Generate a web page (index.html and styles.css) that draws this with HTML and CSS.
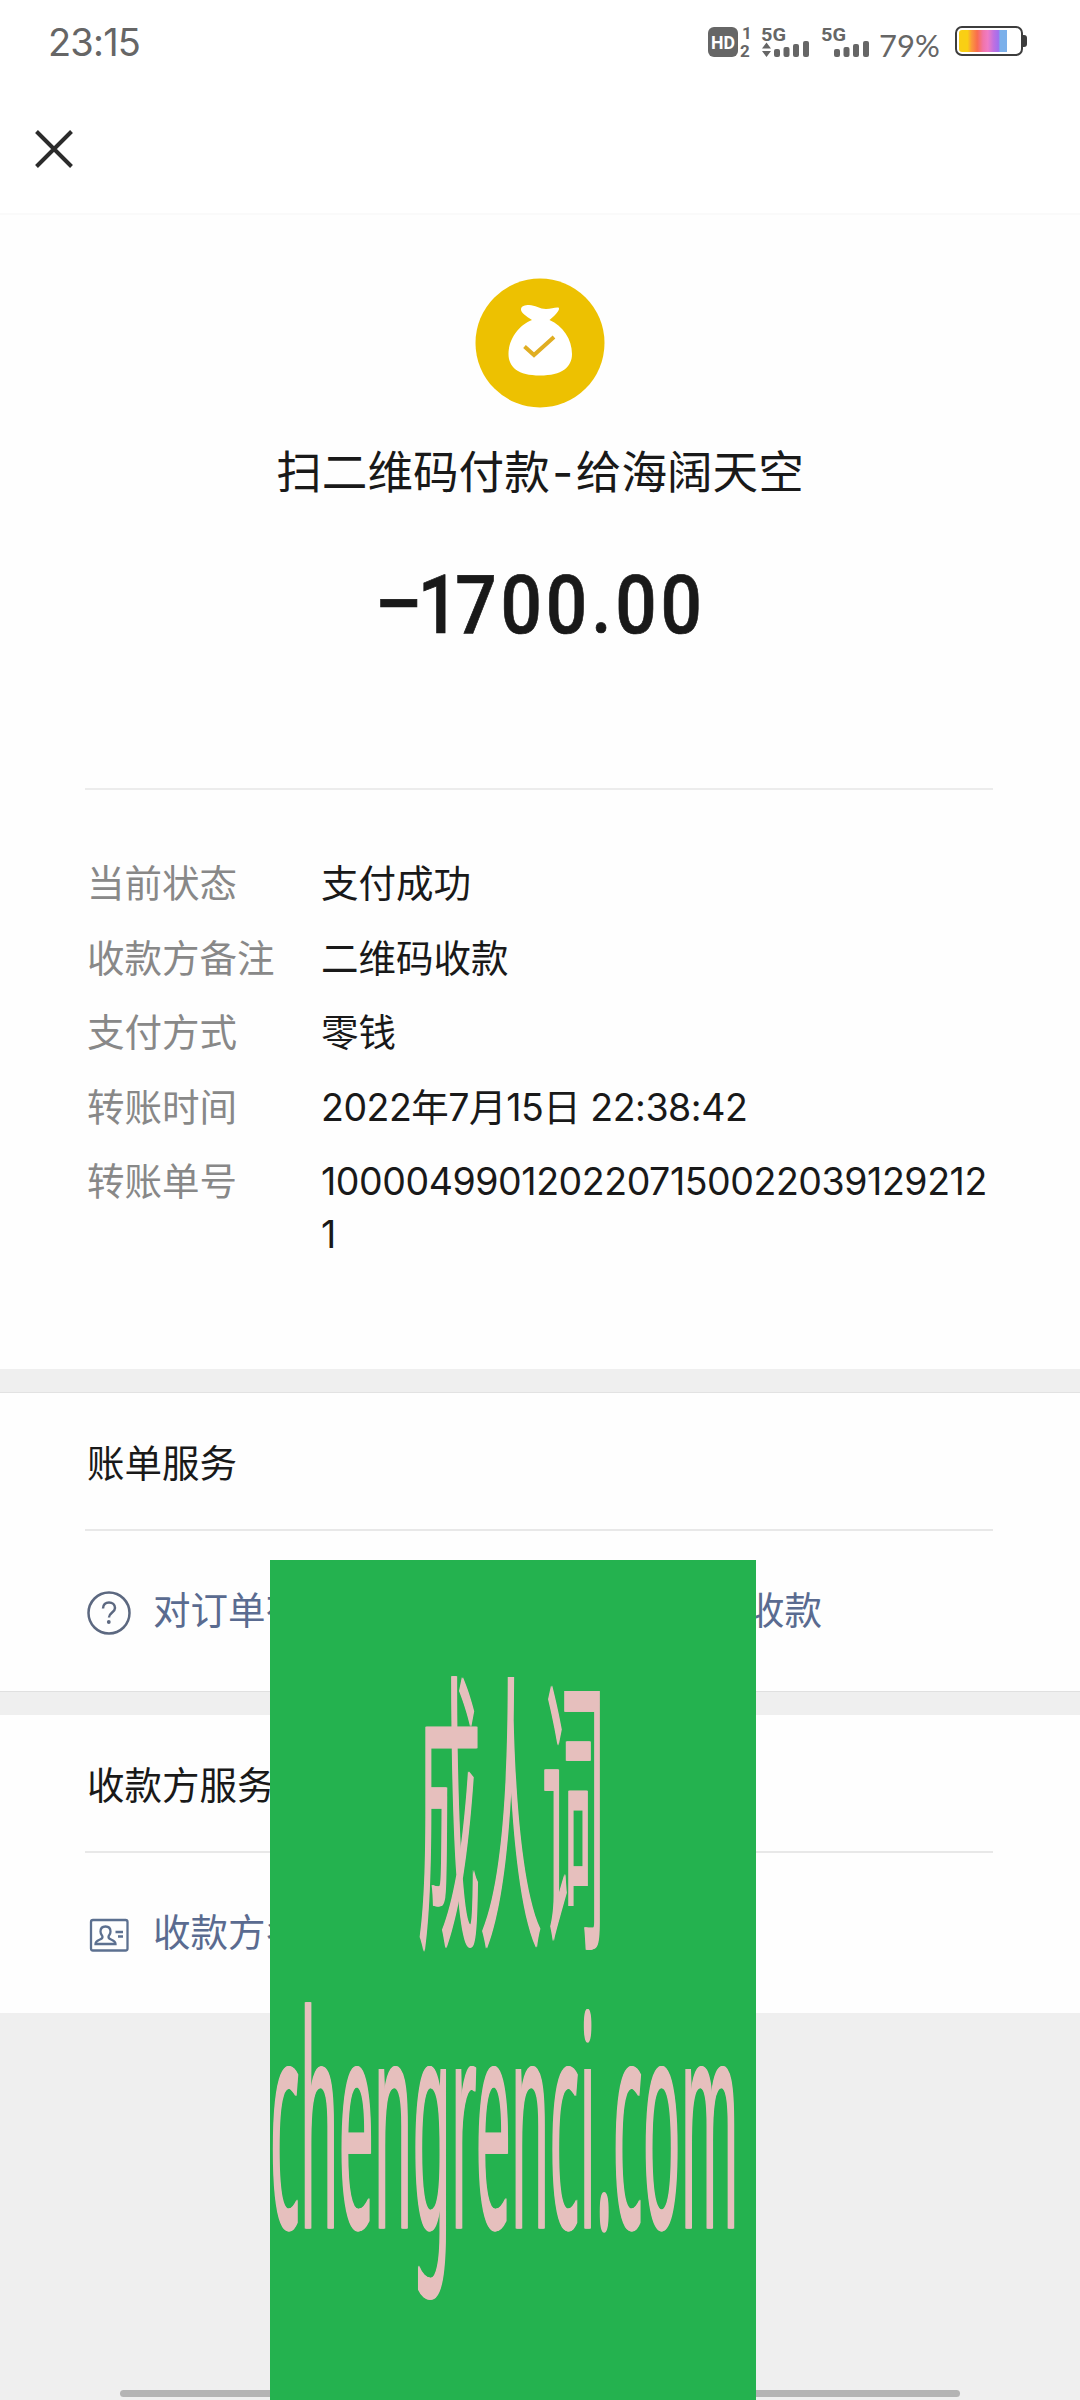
FILE: index.html
```
<!DOCTYPE html>
<html lang="zh-CN">

<head>
    <meta charset="UTF-8">
    <meta name="viewport" content="width=device-width, initial-scale=1.0">
    <title>账单详情</title>
    <link rel="stylesheet" href="styles.css">
</head>

<body>
    <div class="page">
        <div class="status">
            <span class="time">23:15</span>
            <div class="status__right">
                <svg class="network" width="162" height="36" viewBox="0 0 162 36">
                    <rect x="0" y="3" width="30" height="30" rx="6" />
                    <text class="hd" x="3" y="25" textLength="24" lengthAdjust="spacingAndGlyphs">HD</text>
                    <text class="sim" x="34" y="15">1</text>
                    <text class="sim" x="32" y="33">2</text>
                    <text class="net" x="53" y="17" textLength="25" lengthAdjust="spacingAndGlyphs">5G</text>
                    <path d="M58.500 18.500l4.500 6h-9zM58.500 33l4.500-6h-9z" />
                    <rect x="66" y="25" width="6" height="8" rx="2" />
                    <rect x="75.500" y="23" width="6" height="10" rx="2" />
                    <rect x="85" y="20" width="6" height="13" rx="2" />
                    <rect x="95" y="17" width="6" height="16" rx="2" />
                    <text class="net" x="113" y="17" textLength="25" lengthAdjust="spacingAndGlyphs">5G</text>
                    <rect x="126" y="25" width="6" height="8" rx="2" />
                    <rect x="135.500" y="23" width="6" height="10" rx="2" />
                    <rect x="145" y="20" width="6" height="13" rx="2" />
                    <rect x="155" y="17" width="6" height="16" rx="2" />
                </svg>
                <span class="percent">79%</span>
                <div class="battery">
                    <div class="battery__level"></div>
                </div>
            </div>
        </div>
        <div class="nav">
            <svg width="40" height="40" viewBox="0 0 40 40">
                <path d="M2.500 2.500l35 35M37.500 2.500l-35 35" fill="none" stroke="#2b2b2b" stroke-width="4" />
            </svg>
        </div>

        <div class="summary">
            <svg class="logo" width="130" height="130" viewBox="0 0 130 130">
                <circle cx="65" cy="65" r="64.500" fill="#edc101" />
                <path fill="#fff" d="M57 42C51 38 46 35 46 31.500C46 28 50 27 54 27C60 27 65 31 71 31C76 31 80 29 83.500 29.500C85.500 31 82 36 74.500 42C88 48 97 61 97 76C97 89 87 97.500 65 97.500C43 97.500 33.500 89 33.500 76C33.500 61 44 47 57 42Z" />
                <path d="M49.500 68.500l9.500 8.500l20-18" fill="none" stroke="#e0ae22" stroke-width="4" />
            </svg>
            <div class="title">扫二维码付款<span class="dash">-</span>给海阔天空</div>
            <div class="amount"><span class="minus">–</span><span class="one">1</span>700.00</div>
        </div>

        <div class="details">
            <div class="row">
                <span class="label">当前状态</span>
                <span class="value">支付成功</span>
            </div>
            <div class="row">
                <span class="label">收款方备注</span>
                <span class="value">二维码收款</span>
            </div>
            <div class="row">
                <span class="label">支付方式</span>
                <span class="value">零钱</span>
            </div>
            <div class="row">
                <span class="label">转账时间</span>
                <span class="value date">2022年7月15日 22:38:42</span>
            </div>
            <div class="row">
                <span class="label">转账单号</span>
                <span class="value number">1000049901202207150022039129212<br>1</span>
            </div>
        </div>

        <div class="service">
            <h2>账单服务</h2>
            <div class="links">
                <a class="link">
                    <svg width="44" height="44" viewBox="0 0 44 44" fill="none" stroke="#5c6880" stroke-width="2.500">
                        <circle cx="22" cy="22" r="20.500" />
                        <path d="M16 17.500c0-4 2.700-6 6-6s6 2.200 6 5.500c0 4.500-6 4.600-6 9.500" />
                        <circle cx="21.800" cy="31" r="1.900" fill="#5c6880" stroke="none" />
                    </svg>
                    <span>对订单有</span>
                </a>
                <a class="link">
                    <span>收款</span>
                </a>
            </div>
        </div>

        <div class="service">
            <h2>收款方服务</h2>
            <div class="links">
                <a class="link">
                    <svg width="44" height="44" viewBox="0 0 44 44" fill="none" stroke="#5c7090" stroke-width="2.300">
                        <rect x="4" y="7" width="36.500" height="30.500" rx="2" />
                        <path d="M8.500 31c0-5 7-3.500 7-7c0-1.500-2-2.500-2-5.500s2-5 5-5s5 2 5 5s-2 4-2 5.500c0 3.500 7 2 7 7z" />
                        <path d="M28.500 19h7.500M31 23.500h5" />
                    </svg>
                    <span>收款方名</span>
                </a>
            </div>
        </div>

        <div class="home-bar"></div>
        <div class="cover">
            <div class="cover__text">
                <div class="cover__name">成人词</div>
                <div class="cover__site">chengrenci.com</div>
            </div>
        </div>
    </div>
</body>

</html>
```
FILE: styles.css
```
* {
    box-sizing: border-box;
    padding: 0;
    margin: 0;
}

body {
    width: 1080px;
    background-color: #efefef;
    font-family: Inter, "Noto Sans CJK SC", sans-serif;
    color: #191919;
}

.page {
    position: relative;
    height: 2400px;
    overflow: hidden;
}

.status {
    display: flex;
    justify-content: space-between;
    height: 84px;
    padding: 0 53px 0 48px;
    background-color: #fff;
    color: #666;
}

.time {
    font-size: 38px;
    line-height: 84px;
    letter-spacing: -0.8px;
}

.status__right {
    display: flex;
    align-items: flex-start;
}

.network {
    margin-top: 24px;
    fill: #666;
    font-family: Roboto, sans-serif;
    font-weight: 700;
}

.hd {
    fill: #fff;
    font-size: 19px;
}

.sim {
    font-size: 17px;
}

.net {
    font-size: 19px;
}

.percent {
    width: 61px;
    margin-left: 9px;
    margin-top: 27px;
    font-family: Lato, sans-serif;
    font-size: 31px;
    line-height: 37px;
    white-space: nowrap;
}

.battery {
    position: relative;
    width: 68px;
    height: 30px;
    margin: 26px 4px 0 15px;
    padding: 2px;
    border: 2px solid #3d3d3d;
    border-radius: 7px;
}

.battery::after {
    content: "";
    position: absolute;
    top: 7px;
    right: -6px;
    width: 4px;
    height: 12px;
    border-radius: 0 3px 3px 0;
    background-color: #3d3d3d;
}

.battery__level {
    width: 48px;
    height: 22px;
    border-radius: 3px 0 0 3px;
    background: linear-gradient(90deg, #f9cf14 0 18%, #fb9a3c 26%, #f96c4e 38%, #f174a8 50%, #f07cc4 60%, #c070e0 72%, #a070ee 82%, #7cb0ea 86%);
}

.nav {
    display: flex;
    align-items: center;
    height: 131px;
    padding: 1px 0 0 34px;
    background-color: #fff;
    border-bottom: 2px solid #fafafa;
}

.summary {
    display: flex;
    flex-direction: column;
    align-items: center;
    height: 575px;
    padding-top: 63px;
    background-color: #fefefe;
}

.title {
    margin-top: 31px;
    font-size: 45.600px;
    line-height: 68px;
}

.dash {
    display: inline-block;
    width: 26px;
    text-align: center;
}

.amount {
    display: flex;
    align-items: center;
    margin-top: 48px;
    margin-left: 5px;
    font-family: Roboto, sans-serif;
    font-size: 81px;
    font-weight: 500;
    line-height: 100px;
    letter-spacing: 4.300px;
    transform: scaleX(0.9);
    -webkit-text-stroke: 0.700px #191919;
}

.minus {
    display: flex;
    justify-content: center;
    width: 43px;
    padding-bottom: 2px;
    letter-spacing: 0;
}

.one {
    letter-spacing: -4.500px;
}

.details {
    display: flex;
    flex-direction: column;
    gap: 21.600px;
    height: 579px;
    padding: 67px 88px 0 87px;
    background-color: #fefefe;
    font-size: 37.500px;
    line-height: 53px;
    position: relative;
}

.details::before {
    content: "";
    position: absolute;
    top: -2px;
    left: 85px;
    right: 87px;
    height: 2px;
    background-color: #ececec;
}

.row {
    display: flex;
}

.label {
    width: 234px;
    color: #888;
}

.value {
    white-space: nowrap;
}

.date {
    letter-spacing: -0.480px;
}

.number {
    letter-spacing: -0.440px;
}

.service {
    height: 298px;
    margin-bottom: 24px;
    background-color: #fefefe;
    font-size: 37.500px;
}

.details + .service {
    margin-top: 24px;
    box-shadow: 0 -1px 0 #e2e2e2, 0 1px 0 #e0e0e0;
}

.service h2 {
    height: 138px;
    margin: 0 87px 0 85px;
    padding-left: 2px;
    border-bottom: 2px solid #e8e8e8;
    font-size: 37.500px;
    font-weight: 400;
    line-height: 142px;
}

.links {
    display: flex;
    justify-content: space-between;
    padding: 53px 258px 0 87px;
    color: #5a6b90;
}

.link {
    display: flex;
    line-height: 53px;
    white-space: nowrap;
}

.link svg {
    margin: 7px 22px 0 0;
}

/* gesture bar and the banner lie over the page */
.home-bar {
    position: absolute;
    left: 120px;
    top: 2390px;
    width: 840px;
    height: 7px;
    border-radius: 4px;
    background-color: #b4b4b4;
}

.cover {
    position: absolute;
    left: 270px;
    top: 1560px;
    width: 486px;
    height: 840px;
    background-color: #24b24f;
    overflow: hidden;
}

.cover__text {
    position: absolute;
    left: 0;
    top: 102px;
    color: #e6bfbd;
    font-family: "Noto Sans", "Noto Sans CJK SC", sans-serif;
    font-size: 62px;
    line-height: 62.700px;
    white-space: nowrap;
    text-shadow: 0.600px 0 0 #e6bfbd, -0.600px 0 0 #e6bfbd;
    transform: scaleY(4.800);
    transform-origin: 0 0;
}

.cover__name {
    padding-left: 148px;
}

.cover__site {
    letter-spacing: 0.300px;
}
```
